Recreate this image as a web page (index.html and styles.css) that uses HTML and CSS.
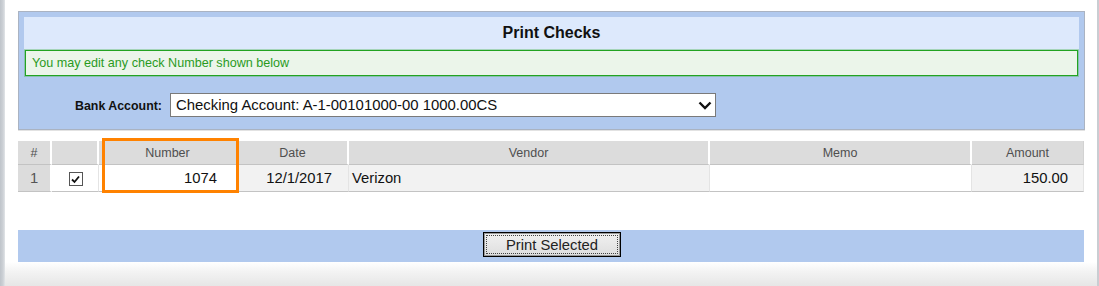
FILE: index.html
```html
<!DOCTYPE html>
<html>
<head>
<meta charset="utf-8">
<title>Print Checks</title>
<link rel="stylesheet" href="styles.css">
</head>
<body>
<div class="window">
  <div class="edge-left"></div>
  <div class="content">
    <div class="page">
      <section class="panel">
        <div class="panel-head">Print Checks</div>
        <div class="notice">You may edit any check Number shown below</div>
        <div class="bank-row">
          <span class="bank-label">Bank Account:</span>
          <div class="select">
            <span class="select-text">Checking Account: A-1-00101000-00 1000.00CS</span>
            <svg class="chev" width="14" height="9" viewBox="0 0 14 9"><polyline points="1.5,1.5 7,7 12.5,1.5" fill="none" stroke="#111" stroke-width="2.4"/></svg>
          </div>
        </div>
      </section>

      <div class="grid-wrap">
        <table class="checks">
          <colgroup>
            <col class="c-num"><col class="c-cb"><col class="c-number"><col class="c-date"><col class="c-vendor"><col class="c-memo"><col class="c-amount">
          </colgroup>
          <thead>
            <tr>
              <th>#</th><th></th><th>Number</th><th>Date</th><th>Vendor</th><th>Memo</th><th>Amount</th>
            </tr>
          </thead>
          <tbody>
            <tr>
              <td class="idx">1</td>
              <td class="cbcell"><span class="checkbox"><svg width="11" height="11" viewBox="0 0 11 11"><polyline points="2,5.5 4.5,8 9,2.5" fill="none" stroke="#111" stroke-width="1.8"/></svg></span></td>
              <td class="number">1074</td>
              <td class="date shade">12/1/2017</td>
              <td class="vendor shade">Verizon</td>
              <td class="memo"></td>
              <td class="amount shade">150.00</td>
            </tr>
          </tbody>
        </table>
        <div class="highlight"></div>
      </div>

      <div class="actions">
        <button class="print-btn" type="button"><span>Print Selected</span></button>
      </div>
    </div>
    <div class="fade"></div>
  </div>
  <div class="edge-right"></div>
</div>
</body>
</html>
```

FILE: styles.css
```css
html, body {
  margin: 0;
  padding: 0;
  background: #fff;
}
body {
  width: 1099px;
  height: 286px;
  overflow: hidden;
  font-family: "Liberation Sans", Arial, sans-serif;
  color: #111;
}
.window {
  display: flex;
  height: 286px;
}
.edge-left {
  width: 5px;
  flex: none;
  background: linear-gradient(to right, #bfc4ca, #cdd1d6 60%, #e2e5e8);
}
.edge-right {
  width: 2px;
  flex: none;
  background: #c9cdd2;
}
.content {
  flex: 1;
  display: flex;
  flex-direction: column;
}
.page {
  padding: 11px 0 0 13px;
  width: 1067px;
}
.panel {
  box-sizing: border-box;
  width: 1067px;
  border: 1px solid #aab3c2;
  background: #b1c9ee;
  padding: 5px 5px 12px 5px;
  box-shadow: 0 1px 0 #e2e2e2;
}
.panel-head {
  height: 33px;
  background: #dde9fc;
  display: flex;
  align-items: center;
  justify-content: center;
  font-size: 16px;
  font-weight: bold;
  color: #111;
  padding-bottom: 1px;
  box-sizing: border-box;
}
.notice {
  box-sizing: border-box;
  height: 26px;
  margin: 0 1px;
  border: 1px solid #22a322;
  box-shadow: 0 0 0 1px rgba(60, 175, 60, 0.35);
  background: #ebf5ea;
  color: #2a9a1e;
  font-size: 12.6px;
  padding-left: 6px;
  display: flex;
  align-items: center;
}
.bank-row {
  margin-top: 17px;
  display: flex;
  align-items: center;
  padding-left: 51px;
}
.bank-label {
  font-size: 12.4px;
  font-weight: bold;
  color: #111;
  margin-top: 1px;
}
.select {
  margin-left: 8px;
  box-sizing: border-box;
  width: 546px;
  height: 24px;
  background: #fff;
  border: 1px solid #7a7a7a;
  display: flex;
  align-items: center;
  justify-content: space-between;
  padding: 0 3px 0 5px;
}
.select-text {
  font-size: 14.9px;
  color: #111;
}
.chev {
  display: block;
}
.grid-wrap {
  position: relative;
  margin-top: 11px;
  width: 1066px;
}
.checks {
  width: 1066px;
  table-layout: fixed;
  border-collapse: separate;
  border-spacing: 0;
}
.c-num { width: 34px; }
.c-cb { width: 47px; }
.c-number { width: 139px; }
.c-date { width: 111px; }
.c-vendor { width: 361px; }
.c-memo { width: 262px; }
.c-amount { width: 112px; }
.checks th {
  height: 23px;
  padding: 0;
  background: #dcdcdc;
  border-right: 2px solid #fff;
  border-bottom: 1px solid #c3c3c3;
  font-weight: normal;
  font-size: 12.5px;
  color: #4f4f4f;
  text-align: center;
  vertical-align: middle;
}
.checks th:last-child {
  border-right: 1px solid #d2d2d2;
}
.checks td {
  height: 26px;
  padding: 0;
  background: #fff;
  border-right: 1px solid #e4e4e4;
  border-bottom: 1px solid #c3c3c3;
  font-size: 14.8px;
  color: #111;
  vertical-align: middle;
}
.checks td.shade {
  background: #f2f2f2;
}
.checks td.idx {
  background: #dcdcdc;
  color: #555;
  text-align: center;
  border-right: 2px solid #fff;
}
.checks td.cbcell {
  text-align: center;
}
.checkbox {
  display: inline-flex;
  align-items: center;
  justify-content: center;
  box-sizing: border-box;
  width: 14px;
  height: 14px;
  border: 1px solid #555;
  background: #fff;
  vertical-align: middle;
  margin-left: 1px;
}
.checks td.number {
  text-align: right;
  padding-right: 20px;
}
.checks td.date {
  text-align: right;
  padding-right: 16px;
}
.checks td.vendor {
  padding-left: 3px;
}
.checks td.amount {
  text-align: right;
  padding-right: 15px;
}
.highlight {
  position: absolute;
  left: 84px;
  top: -3px;
  width: 137px;
  height: 55px;
  box-sizing: border-box;
  border: 3px solid #ff8200;
  pointer-events: none;
}
.actions {
  margin-top: 38px;
  width: 1066px;
  height: 32px;
  background: #b1c9ee;
  display: flex;
  justify-content: center;
  align-items: flex-start;
}
.print-btn {
  margin-top: 2px;
  margin-left: 2px;
  box-sizing: border-box;
  width: 138px;
  height: 25px;
  padding: 2px;
  border: 1px solid #000;
  background: linear-gradient(#f1f1f1, #dedede);
  box-shadow: inset 0 0 0 1px #9a9a9a;
  font-family: "Liberation Sans", Arial, sans-serif;
  font-size: 14.8px;
  color: #222;
  cursor: pointer;
}
.print-btn span {
  display: flex;
  align-items: center;
  justify-content: center;
  height: 100%;
  box-sizing: border-box;
  border: 1px dotted #444;
}
.fade {
  flex: 1;
  background: linear-gradient(#ffffff, #f3f3f3 40%, #e6e6e6);
}
```
